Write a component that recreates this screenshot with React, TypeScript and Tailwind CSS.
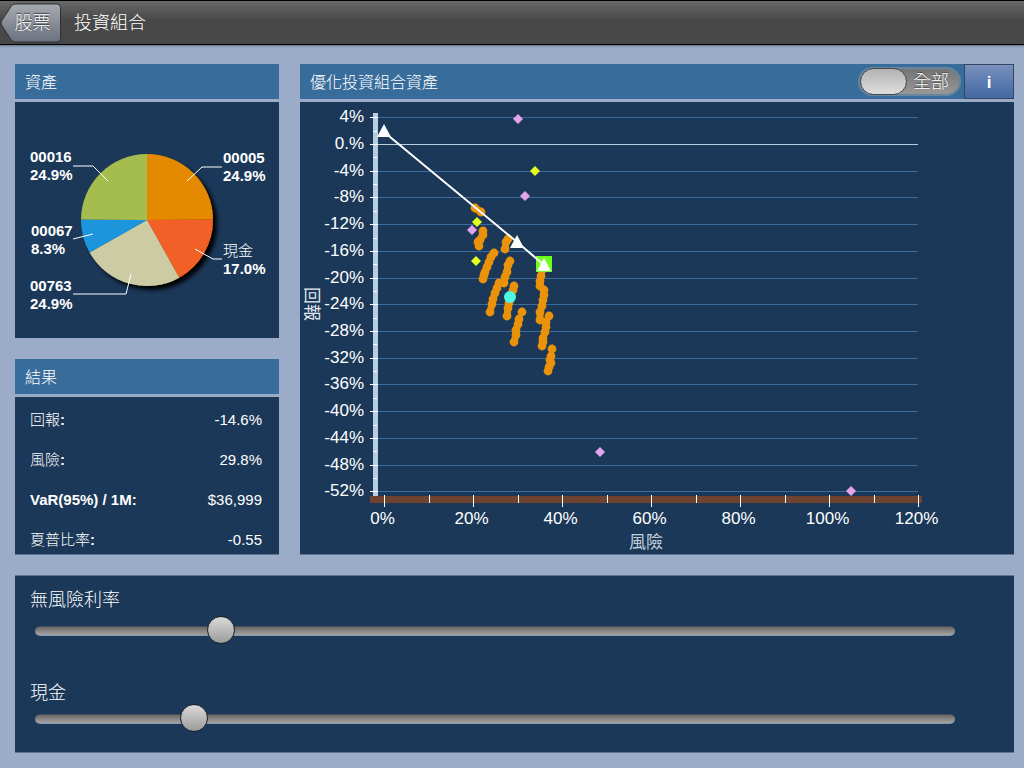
import { useState } from "react";

const slices = [
  { name: "00005", value: 24.9, color: "#e58a00", x: 208, y: 61, line: "172,79 187,65 207,65" },
  { name: "現金", value: 17.0, color: "#f16027", x: 208, y: 154, light: true, line: "180,147 198,157 207,157" },
  { name: "00763", value: 24.9, color: "#cccba3", x: 15, y: 189, line: "116,172 111,192 58,192" },
  { name: "00067", value: 8.3, color: "#1b95dc", x: 16, y: 134, line: "78,132 58,137" },
  { name: "00016", value: 24.9, color: "#a5bd4f", x: 15, y: 60, line: "93,79 78,64 58,64" },
];

const results = [
  { label: "回報:", value: "-14.6%" },
  { label: "風險:", value: "29.8%" },
  { label: "VaR(95%) / 1M:", value: "$36,999" },
  { label: "夏普比率:", value: "-0.55" },
];

// Simulated portfolios, one trail for each allocation step
const trails = [
  [[175, 106], [181, 110]],
  [[183, 129], [183, 133], [180, 138], [178, 140], [179, 144]],
  [[194, 151], [191, 155], [189, 160], [187, 165], [185, 170], [184, 173], [183, 177]],
  [[208, 137], [206, 140], [205, 147]],
  [[210, 159], [208, 163], [207, 170], [205, 175], [204, 181], [199, 181], [197, 186], [195, 191], [193, 197], [192, 202], [190, 210]],
  [[214, 184], [213, 188], [211, 193], [209, 201], [208, 206], [207, 214]],
  [[222, 210]],
  [[219, 217], [218, 222], [216, 228], [216, 233], [214, 240]],
  [[242, 168], [241, 174], [240, 179], [240, 184]],
  [[244, 188], [244, 193], [243, 198], [242, 204], [240, 210], [240, 218]],
  [[249, 214]],
  [[246, 220], [246, 225], [245, 230], [243, 236], [243, 240], [242, 244]],
  [[252, 247]],
  [[251, 254], [250, 258], [251, 261], [249, 265], [248, 269]],
];

const stocks = [
  { x: 218, y: 17, color: "#e3a4ec" },
  { x: 225, y: 94, color: "#e3a4ec" },
  { x: 172, y: 128, color: "#e3a4ec" },
  { x: 300, y: 350, color: "#e3a4ec" },
  { x: 551, y: 389, color: "#e3a4ec" },
  { x: 235, y: 69, color: "#e3ff1e" },
  { x: 177, y: 120, color: "#e3ff1e" },
  { x: 176, y: 159, color: "#e3ff1e" },
];

const yTicks = [4, 0, -4, -8, -12, -16, -20, -24, -28, -32, -36, -40, -44, -48, -52];
const xTicks = [0, 20, 40, 60, 80, 100, 120];

const toX = (risk: number) => Math.round(84 + risk * 4.45) + 0.5;
const toY = (ret: number) => Math.round(42 - ret * 6.68) + 0.5;

function PieChart() {
  const cx = 132;
  const cy = 118;
  const r = 66;
  const point = (p: number) => {
    const a = (p / 100) * Math.PI * 2;
    return `${cx + r * Math.sin(a)} ${cy - r * Math.cos(a)}`;
  };
  let start = 0;
  const paths = slices.map((s) => {
    const from = start;
    start += s.value;
    return <path key={s.name} d={`M${cx} ${cy}L${point(from)}A${r} ${r} 0 0 1 ${point(start)}Z`} fill={s.color} />;
  });

  return (
    <svg viewBox="0 0 264 236" className="block w-full">
      <defs>
        <filter id="pieShadow" x="-20%" y="-20%" width="150%" height="150%">
          <feDropShadow dx="4" dy="4" stdDeviation="2" floodColor="#000" floodOpacity="1" />
        </filter>
      </defs>
      <g filter="url(#pieShadow)">{paths}</g>
      {slices.map((s) => (
        <g key={s.name}>
          <polyline points={s.line} fill="none" stroke="#fff" />
          <text x={s.x} y={s.y} fill="#fff" fontSize="15" fontWeight={s.light ? 300 : 700}>
            {s.name}
          </text>
          <text x={s.x} y={s.y + 18} fill="#fff" fontSize="15" fontWeight="700">
            {s.value.toFixed(1)}%
          </text>
        </g>
      ))}
    </svg>
  );
}

function Triangle({ x, y }: { x: number; y: number }) {
  return <path d={`M${x} ${y - 7}L${x + 7} ${y + 6}H${x - 7}Z`} fill="#fff" />;
}

function ScatterChart() {
  return (
    <svg viewBox="0 0 714 452" className="block w-full">
      {/* Grid */}
      {yTicks.map((t) => (
        <g key={t}>
          <line x1="78" x2="618" y1={toY(t)} y2={toY(t)} stroke={t === 0 ? "#b8cfe2" : "#3a6c9b"} />
          <text x="64" y={toY(t) + 4} textAnchor="end" fill="#fff" fontSize="17">
            {t === 0 ? "0.%" : `${t}%`}
          </text>
        </g>
      ))}

      {/* Axes */}
      <rect x="73" y="11" width="5" height="383" fill="#b5cde0" />
      {yTicks.map((t) => (
        <g key={t} stroke="#fff">
          <line x1="70" x2="78" y1={toY(t)} y2={toY(t)} />
          {t > -52 && <line x1="73" x2="77" y1={toY(t - 2)} y2={toY(t - 2)} />}
        </g>
      ))}
      <rect x="70" y="394" width="552" height="7" fill="#704331" />
      {xTicks.map((t) => (
        <g key={t}>
          <line x1={toX(t)} x2={toX(t)} y1="393" y2="405" stroke="#fff" />
          {t < 120 && <line x1={toX(t + 10)} x2={toX(t + 10)} y1="393" y2="401" stroke="#fff" />}
          <text x={toX(t) - 2} y="422" textAnchor="middle" fill="#fff" fontSize="17">
            {t}%
          </text>
        </g>
      ))}
      <text x="346" y="446" textAnchor="middle" fill="#c3cfdc" fontSize="17">
        風險
      </text>
      <text transform="translate(6 185) rotate(90)" fill="#e3e9f0" fontSize="17">
        回報
      </text>

      {/* Portfolios */}
      {trails.map((trail, i) => (
        <g key={i} fill="#ea9209">
          <polyline points={trail.join(" ")} fill="none" stroke="#ea9209" strokeWidth="7" strokeLinejoin="round" />
          {trail.map(([x, y]) => (
            <circle key={`${x}-${y}`} cx={x} cy={y} r="4.4" />
          ))}
        </g>
      ))}
      <rect x="236" y="154" width="16" height="16" fill="#6dff1e" />
      {stocks.map((s) => (
        <path key={`${s.x}-${s.y}`} d={`M${s.x} ${s.y - 5}l5 5l-5 5l-5 -5Z`} fill={s.color} />
      ))}
      <circle cx="210" cy="195" r="6" fill="#4df7e2" />

      {/* Efficient line */}
      <polyline points="84,30 217,140 244,163" fill="none" stroke="#fff" strokeWidth="2" />
      <Triangle x={84} y={29} />
      <Triangle x={217} y={140} />
      <Triangle x={244} y={163} />
    </svg>
  );
}

interface SliderProps {
  id: string;
  label: string;
  initial: number;
}

function Slider({ id, label, initial }: SliderProps) {
  const [value, setValue] = useState(initial);

  return (
    <>
      <label htmlFor={id} className="block text-[18px] leading-6 font-light">
        {label}
      </label>
      <div className="pl-[5px]">
        <input
          id={id}
          type="range"
          min="0"
          max="100"
          step="0.1"
          value={value}
          onChange={(e) => setValue(Number(e.target.value))}
          className="block h-7 w-full cursor-pointer appearance-none bg-transparent [&::-webkit-slider-runnable-track]:h-[10px] [&::-webkit-slider-runnable-track]:rounded-full [&::-webkit-slider-runnable-track]:border-t [&::-webkit-slider-runnable-track]:border-b [&::-webkit-slider-runnable-track]:border-t-[#4b4e52] [&::-webkit-slider-runnable-track]:border-b-[#8797ab] [&::-webkit-slider-runnable-track]:bg-linear-to-b [&::-webkit-slider-runnable-track]:from-[#6b6968] [&::-webkit-slider-runnable-track]:to-[#a3a3a3] [&::-webkit-slider-thumb]:-mt-[11px] [&::-webkit-slider-thumb]:size-7 [&::-webkit-slider-thumb]:appearance-none [&::-webkit-slider-thumb]:rounded-full [&::-webkit-slider-thumb]:border [&::-webkit-slider-thumb]:border-[#1c2028] [&::-webkit-slider-thumb]:bg-linear-to-b [&::-webkit-slider-thumb]:from-[#dadada] [&::-webkit-slider-thumb]:to-[#9c9c9c]"
        />
      </div>
    </>
  );
}

export default function App() {
  const [showAll, setShowAll] = useState(false);

  return (
    <div className="min-h-screen bg-[#9aacc8] font-['Liberation_Sans','Noto_Sans_CJK_TC',sans-serif] text-white">
      {/* Header */}
      <header className="flex h-[45px] items-center border-y border-black bg-linear-to-b from-[#686868] via-[#484848] via-45% to-[#474747] shadow-[0_1px_2px_#5f6d80]">
        <button className="relative h-10 w-[61px] pt-0.5 pl-1 text-[18px] font-light">
          <svg viewBox="0 0 61 40" className="absolute inset-0 size-full">
            <defs>
              <linearGradient id="back" x1="0" y1="0" x2="0" y2="1">
                <stop offset="0" stopColor="#a8abb3" />
                <stop offset="0.5" stopColor="#888d97" />
                <stop offset="1" stopColor="#6b727f" />
              </linearGradient>
            </defs>
            <path
              d="M1.5 18Q0.5 20 1.5 22L11 36.500Q12.500 39 15 39H57Q60.500 39 60.500 35.500V4.500Q60.500 1 57 1H15Q12.500 1 11 3.500Z"
              fill="url(#back)"
              stroke="#2d3036"
            />
          </svg>
          <span className="relative [text-shadow:0_-1px_1px_#333]">股票</span>
        </button>
        <h1 className="pt-0.5 pl-[13px] text-[18px] font-light">投資組合</h1>
      </header>

      <main className="pt-[19px] pr-[10px] pb-[15px] pl-[15px]">
        <div className="grid grid-cols-[264px_1fr] items-start gap-[21px]">
          <div className="flex flex-col gap-[21px]">
            {/* Assets */}
            <section>
              <h2 className="flex h-[35px] items-center bg-[#386c9b] pt-0.5 pl-[10px] text-[16px] font-light">資產</h2>
              <div className="mt-[3px] bg-[#1b3859]">
                <PieChart />
              </div>
            </section>

            {/* Results */}
            <section>
              <h2 className="flex h-[35px] items-center bg-[#386c9b] pt-0.5 pl-[10px] text-[16px] font-light">結果</h2>
              <dl className="mt-[3px] flex flex-col gap-4 border-b border-[#5a7596] bg-[#1b3859] pt-[11px] pr-[17px] pb-[2px] pl-[15px]">
                {results.map((r) => (
                  <div key={r.label} className="flex h-6 items-center justify-between">
                    <dt className="text-[15px]">
                      <span className={r.label.startsWith("VaR") ? "font-bold" : "font-light"}>{r.label.slice(0, -1)}</span>
                      <span className="font-bold">:</span>
                    </dt>
                    <dd className="text-[15px]">{r.value}</dd>
                  </div>
                ))}
              </dl>
            </section>
          </div>

          {/* Optimised portfolio */}
          <section>
            <div className="flex h-[35px] items-center bg-[#386c9b] pl-[10px]">
              <h2 className="flex-1 pt-0.5 text-[16px] font-light">優化投資組合資產</h2>
              <button
                role="switch"
                aria-checked={showAll}
                onClick={() => setShowAll(!showAll)}
                className="mr-[3px] flex h-[29px] w-[103px] items-center rounded-full border-2 border-[#68859f] bg-linear-to-b from-[#757575] to-[#989898] text-[18px] font-light"
              >
                <span className="h-[27px] w-[47px] rounded-full border border-[#44474b] bg-linear-to-b from-[#b2b2b2] to-[#dedede]" />
                <span className="flex-1 pt-0.5 pr-1 [text-shadow:0_-1px_1px_#444]">全部</span>
              </button>
              <button className="h-[35px] w-[50px] border border-[#36465f] bg-linear-to-b from-[#7991bd] via-[#5c7bb0] via-50% to-[#4469a3] pt-0.5 text-[17px] font-bold">
                i
              </button>
            </div>
            <div className="mt-[3px] border-b border-[#5a7596] bg-[#1b3859]">
              <ScatterChart />
            </div>
          </section>
        </div>

        {/* Parameters */}
        <section className="mt-[20px] flex flex-col border-y border-[#5a7596] bg-[#1b3859] pt-[12px] pr-[59px] pb-[19px] pl-[15px]">
          <div className="flex flex-col gap-[5px]">
            <Slider id="rate" label="無風險利率" initial={19.3} />
          </div>
          <div className="mt-9 flex flex-col">
            <Slider id="cash" label="現金" initial={16.3} />
          </div>
        </section>
      </main>
    </div>
  );
}
